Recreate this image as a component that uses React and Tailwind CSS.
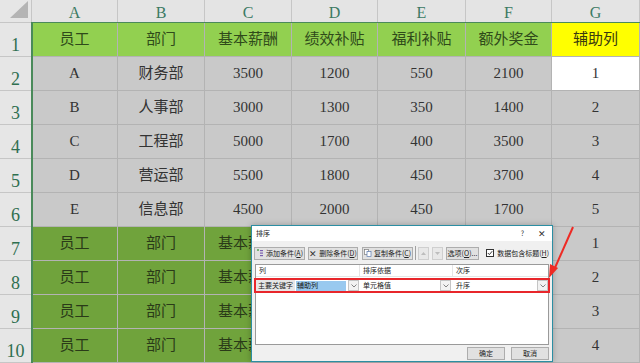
import React from 'react';

// column widths in px, A..G (row header is 32px)
const COLS = ['A', 'B', 'C', 'D', 'E', 'F', 'G'];

const HEADER = ['员工', '部门', '基本薪酬', '绩效补贴', '福利补贴', '额外奖金', '辅助列'];

const DATA = [
  ['A', '财务部', '3500', '1200', '550', '2100', '1'],
  ['B', '人事部', '3000', '1300', '350', '1400', '2'],
  ['C', '工程部', '5000', '1700', '400', '3500', '3'],
  ['D', '营运部', '5500', '1800', '450', '3700', '4'],
  ['E', '信息部', '4500', '2000', '450', '1700', '5'],
];

const COPIES = ['1', '2', '3', '4'];

const serif = { fontFamily: '"Liberation Serif", "Noto Sans CJK SC", serif' };
const uiFont = { fontFamily: '"Noto Sans CJK SC", "Liberation Sans", sans-serif' };

// Cell with grid line on right/bottom
const Cell = ({ className = '', children }) => (
  <div className={`flex items-center justify-center border-r border-b border-[#b3b3b3] text-[15px] ${className}`}>
    {children}
  </div>
);

const RowHead = ({ n }) => (
  <div className="flex items-end justify-center pb-[1px] border-r border-b border-[#c6c6c6] bg-[#e6e6e6] text-[18px] text-[#2f6f50] leading-none h-full">
    <span className="mb-[1px]">{n}</span>
  </div>
);

// small dialog button
const DlgButton = ({ className = '', children }) => (
  <div className={`h-[13px] flex items-center justify-center border border-[#adadad] bg-[#e1e1e1] text-[7px] text-[#222] leading-none ${className}`}>
    {children}
  </div>
);

const ComboArrow = () => (
  <div className="w-[11px] h-[11px] flex items-center justify-center border border-[#c5c5c5] bg-[#f2f2f2]">
    <svg width="6" height="4" viewBox="0 0 6 4">
      <path d="M0.5 0.5 L3 3 L5.5 0.5" fill="none" stroke="#666" strokeWidth="0.8" />
    </svg>
  </div>
);

const SortDialog = () => (
  <div
    className="absolute left-[251px] top-[225px] w-[302px] h-[137px] border border-[#2b8ea3] bg-[#f0f0f0] flex flex-col shadow-[0_0_6px_rgba(0,0,0,0.25)]"
    style={uiFont}
  >
    {/* title */}
    <div className="h-[15px] bg-white flex items-center justify-between pl-[4px] pr-[6px] text-[7px] text-[#222] leading-none">
      <span>排序</span>
      <div className="flex items-center gap-[14px] text-[#333]">
        <span className="text-[7px]">?</span>
        <span className="text-[9px]">✕</span>
      </div>
    </div>

    {/* toolbar */}
    <div className="flex items-center mt-[5px] pl-[2px] pr-[3px]">
      <DlgButton className="w-[51px] gap-[2px]">
        <svg width="8" height="8" viewBox="0 0 8 8">
          <path d="M1 1 h2 M2 0 v2" stroke="#3a9a3a" strokeWidth="0.8" />
          <rect x="4" y="1" width="3" height="1.2" fill="#7a5fb0" />
          <rect x="4" y="3.5" width="3" height="1.2" fill="#7a5fb0" />
          <rect x="4" y="6" width="3" height="1.2" fill="#7a5fb0" />
        </svg>
        <span>添加条件(<u>A</u>)</span>
      </DlgButton>
      <DlgButton className="w-[50px] ml-[3px] gap-[2px]">
        <span className="text-[9px] text-[#333]">✕</span>
        <span>删除条件(<u>D</u>)</span>
      </DlgButton>
      <DlgButton className="w-[51px] ml-[4px] gap-[2px]">
        <svg width="8" height="8" viewBox="0 0 8 8">
          <rect x="0.5" y="0.5" width="4" height="5" fill="#fff" stroke="#7a7a7a" strokeWidth="0.7" />
          <rect x="3" y="2.5" width="4" height="5" fill="#fff" stroke="#5a7ab0" strokeWidth="0.7" />
        </svg>
        <span>复制条件(<u>C</u>)</span>
      </DlgButton>
      <div className="w-px h-[14px] bg-[#a0a0a0] ml-[2px]" />
      <DlgButton className="w-[11px] ml-[2px] bg-[#e8e8e8] border-[#cfcfcf]">
        <svg width="5" height="3" viewBox="0 0 5 3"><path d="M0 3 L2.5 0 L5 3 Z" fill="#bdbdbd" /></svg>
      </DlgButton>
      <DlgButton className="w-[11px] ml-[3px] bg-[#e8e8e8] border-[#cfcfcf]">
        <svg width="5" height="3" viewBox="0 0 5 3"><path d="M0 0 L2.5 3 L5 0 Z" fill="#bdbdbd" /></svg>
      </DlgButton>
      <DlgButton className="w-[33px] ml-[3px]">
        <span>选项(<u>O</u>)...</span>
      </DlgButton>
      <div className="flex items-center ml-auto gap-[3px] text-[7px] text-[#222] leading-none">
        <div className="w-[8px] h-[8px] border border-[#333] bg-white flex items-center justify-center">
          <svg width="6" height="6" viewBox="0 0 6 6"><path d="M0.8 3 L2.4 4.6 L5.2 1.2" fill="none" stroke="#222" strokeWidth="0.9" /></svg>
        </div>
        <span>数据包含标题(<u>H</u>)</span>
      </div>
    </div>

    {/* condition list */}
    <div className="mx-[3px] mt-[4px] h-[81px] bg-white border border-[#9a9a9a] flex flex-col text-[7px] text-[#222] leading-none">
      <div className="flex h-[12px] border-b border-[#e5e5e5]">
        <div className="w-[104px] flex items-center pl-[3px] border-r border-[#e5e5e5]">列</div>
        <div className="w-[93px] flex items-center pl-[3px] border-r border-[#e5e5e5]">排序依据</div>
        <div className="flex-1 flex items-center pl-[3px]">次序</div>
      </div>
      <div className="flex items-center h-[15px] mt-px -mx-[2px] border-2 border-[#e8262b]">
        <div className="w-[39px] h-full flex items-center pl-[2px] bg-[#e6e6e6]">主要关键字</div>
        <div className="w-[52px] h-full flex items-center ml-[1px]">
          <span className="w-[50px] h-[10px] flex items-center pl-[1px] bg-[#99c9ef] text-[#111]">辅助列</span>
        </div>
        <ComboArrow />
        <div className="w-[3px]" />
        <div className="w-[78px] h-full flex items-center pl-[1px]">单元格值</div>
        <ComboArrow />
        <div className="w-[4px]" />
        <div className="flex-1 h-full flex items-center pl-[1px]">升序</div>
        <ComboArrow />
      </div>
    </div>

    {/* bottom buttons */}
    <div className="flex justify-end gap-[6px] mt-[2px] pr-[3px]">
      <DlgButton className="w-[38px] border-[#0078d7] border-[1.5px]">确定</DlgButton>
      <DlgButton className="w-[38px]">取消</DlgButton>
    </div>
  </div>
);

const App = () => {
  return (
    <div className="relative w-[640px] h-[363px] overflow-hidden bg-white" style={serif}>
      <div className="grid grid-cols-[32px_86px_87px_87px_86px_88px_86px_88px] grid-rows-[23px_repeat(10,34px)]">
        {/* corner */}
        <div className="border-r border-b border-[#c6c6c6] bg-[#e6e6e6] flex items-end justify-end">
          <svg width="20" height="18" viewBox="0 0 20 18" className="mb-[3px] mr-[2px]">
            <path d="M19 0 L19 17 L1 17 Z" fill="#b4b4b4" />
          </svg>
        </div>
        {COLS.map((c) => (
          <div key={c} className="flex items-center justify-center pt-[3px] border-r border-b border-[#c6c6c6] bg-[#e4e4e4] text-[16px] text-[#3b7a63] leading-none">
            {c}
          </div>
        ))}

        {/* row 1 header */}
        <RowHead n={1} />
        {HEADER.map((h, i) => (
          <Cell key={h} className={i === 6 ? 'bg-[#ffff00] text-[#3a3a10]' : 'bg-[#92d050] text-[#2f4a1a] border-[#86c043]'}>
            {h}
          </Cell>
        ))}

        {/* rows 2-6 */}
        {DATA.map((row, r) => (
          <React.Fragment key={r}>
            <RowHead n={r + 2} />
            {row.map((v, i) => (
              <Cell key={i} className={r === 0 && i === 6 ? 'bg-white text-[#333]' : 'bg-[#c9c9c9] text-[#333]'}>
                {v}
              </Cell>
            ))}
          </React.Fragment>
        ))}

        {/* rows 7-10: copied header rows, D-F sit under the dialog */}
        {COPIES.map((n, r) => (
          <React.Fragment key={n}>
            <RowHead n={r + 7} />
            {HEADER.slice(0, 6).map((h, i) => (
              <Cell key={h} className="bg-[#70a33c] text-[#2a3a18] border-[#70a33c]">
                {i < 3 ? h : ''}
              </Cell>
            ))}
            <Cell className="bg-[#c9c9c9] text-[#333]">{n}</Cell>
          </React.Fragment>
        ))}
      </div>

      {/* selection outline */}
      <div className="absolute left-[31px] top-[22px] right-0 bottom-0 border-l-2 border-t border-[#4a8a5a] pointer-events-none" />

      <SortDialog />

      {/* red arrow */}
      <svg className="absolute left-[540px] top-[220px]" width="40" height="70" viewBox="0 0 40 70">
        <path d="M33 7 L14 50" stroke="#ee2a24" strokeWidth="2" fill="none" />
        <path d="M9 58 L10 44 L18 48 Z" fill="#ee2a24" />
      </svg>
    </div>
  );
};

export default App;
